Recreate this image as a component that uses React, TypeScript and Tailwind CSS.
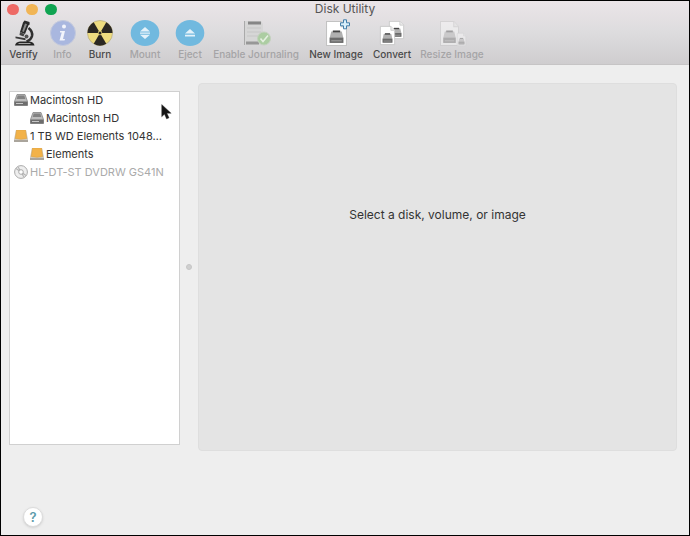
import { useState } from 'react';
import type { ReactNode } from 'react';
import clsx from 'clsx';

interface Tool {
  label: string;
  width: string;
  icon: ReactNode;
  disabled?: boolean;
}

interface Disk {
  id: string;
  name: string;
  icon: ReactNode;
  child?: boolean;
  dim?: boolean;
}

function MicroscopeIcon() {
  return (
    <svg viewBox="0 0 30 28" className="h-7 w-[30px]">
      <path d="M14 3.500l1.500-2 5 1.500.2 2.500-1.200.8-3.500 8.700-5-2z" fill="#2b2b2b" />
      <path d="M16 4.500l2 .8-3.200 7.700-1.600-.7z" fill="#8a8a8a" />
      <path d="M11 13l4.500 2-1 2.500-4-1.500z" fill="#444" />
      <path d="M19.500 9q4.500 3.500 3.500 8-1 4-5.500 5.500" fill="none" stroke="#303030" strokeWidth="2.600" />
      <path d="M6.500 17.500l10 1.800v2l-10-2z" fill="#3a3a3a" />
      <path d="M6 26.500q.5-3.500 5-4h9.500q4.500.5 5 4z" fill="#262626" />
      <path d="M9.500 24.500h12" stroke="#a5a5a5" />
      <circle cx="17.500" cy="17.500" r="2" fill="#555" />
    </svg>
  );
}

function InfoIcon() {
  return (
    <svg viewBox="0 0 30 28" className="h-7 w-[30px]">
      <circle cx="15" cy="14" r="12.500" fill="#a9b7df" stroke="#c3c9dd" />
      <circle cx="16" cy="7.500" r="2" fill="#f2f4fb" />
      <path d="M12 12h5l-2 8h2l-.5 1.500h-5l2.200-8H12z" fill="#f2f4fb" />
    </svg>
  );
}

function BurnIcon() {
  return (
    <svg viewBox="0 0 30 28" className="h-7 w-[30px]">
      <circle cx="15" cy="14" r="12.500" fill="#eedc7f" stroke="#b5a97a" strokeWidth=".7" />
      <g fill="#2b2822">
        <path d="M15 14L2.500 14A12.500 12.500 0 0 1 8.700 3.200z" />
        <path d="M15 14L21.300 3.200A12.500 12.500 0 0 1 27.500 14z" />
        <path d="M15 14L21.300 24.800A12.500 12.500 0 0 1 8.700 24.800z" />
      </g>
      <circle cx="15" cy="14" r="2.200" fill="#eedc7f" />
      <circle cx="15" cy="14" r="1.500" fill="#2b2822" />
    </svg>
  );
}

function MountIcon() {
  return (
    <svg viewBox="0 0 30 28" className="h-7 w-[30px]">
      <ellipse cx="15" cy="14" rx="14.300" ry="13" fill="#71b9df" />
      <path d="M15 8l5 4.500H10zM10 13.500h10v1.200H10zM10 15.800h10L15 20z" fill="#e4f2fa" />
    </svg>
  );
}

function EjectIcon() {
  return (
    <svg viewBox="0 0 30 28" className="h-7 w-[30px]">
      <ellipse cx="15" cy="14" rx="14.300" ry="13" fill="#71b9df" />
      <path d="M15 10l5 4.500H10zM10 15.700h10v1.800H10z" fill="#e4f2fa" />
    </svg>
  );
}

function JournalIcon() {
  return (
    <svg viewBox="0 0 30 28" className="h-7 w-[30px]">
      <path d="M3 2h17l2 3v21H3z" fill="#d6d6d6" />
      <path d="M3.500 2v24" stroke="#aaa" />
      <path d="M7 4h13" stroke="#868686" strokeWidth="3" />
      <path d="M6 9h14M6 13h14M6 17h11" stroke="#c6c6c6" />
      <path d="M5 24h13" stroke="#979797" strokeWidth="3" />
      <circle cx="23" cy="19.500" r="6.500" fill="#accda2" stroke="#c3d1be" />
      <path d="M19.500 19.500l2.500 3 5-6" fill="none" stroke="#e5efe1" strokeWidth="1.600" />
    </svg>
  );
}

function Sheet({ x, y, w, h }: { x: number; y: number; w: number; h: number }) {
  return (
    <g transform={`translate(${x} ${y}) scale(${w / 20} ${h / 24})`}>
      <path d="M.5.5h14l5 5v18H.5z" fill="#fff" stroke="#c2c2c2" />
      <path d="M14.500.5v5h5" fill="#ececec" stroke="#c6c6c6" />
      <path d="M5 10h10l1.500 6v5h-13v-5z" fill="#b0b0b0" />
      <path d="M6.500 10h7" stroke="#444" strokeWidth="1.800" />
      <path d="M3.500 16h13v5h-13z" fill="#6b6b6b" />
      <path d="M5 19h10" stroke="#a0a0a0" />
    </g>
  );
}

function NewImageIcon() {
  return (
    <svg viewBox="0 0 30 28" className="h-7 w-[30px]">
      <Sheet x={5} y={2} w={21} h={25} />
      <path d="M22.500.8h3v3h3v3h-3v3h-3v-3h-3v-3h3z" fill="#d9effb" stroke="#437eaa" />
    </svg>
  );
}

function ConvertIcon() {
  return (
    <svg viewBox="0 0 30 28" className="h-7 w-[30px]">
      <Sheet x={12} y={2} w={15} h={18} />
      <Sheet x={3} y={7} w={15} h={19} />
    </svg>
  );
}

function ResizeIcon() {
  return (
    <svg viewBox="0 0 30 28" className="h-7 w-[30px] opacity-40">
      <Sheet x={3} y={2} w={19} h={25} />
      <Sheet x={20} y={14} w={9} h={13} />
    </svg>
  );
}

function DriveIcon() {
  return (
    <svg viewBox="0 0 14 12" className="h-3 w-3.5 shrink-0">
      <path d="M3 .5h8l2.500 7v4H.5v-4z" fill="#bcbcbc" stroke="#858585" strokeWidth=".8" />
      <path d="M3.700 1.500h6.600l1 3.500H2.700z" fill="#828282" />
      <path d="M.5 7.500h13v4H.5z" fill="#6d6d6d" />
      <path d="M2 9.500h7" stroke="#c7c7c7" />
    </svg>
  );
}

function ExternalIcon() {
  return (
    <svg viewBox="0 0 14 12" className="h-3 w-3.5 shrink-0">
      <path d="M2 0h10l2 9v3H0V9z" fill="#d0cbc2" />
      <path d="M2.500 0h9l1.200 8.500q-5.700 1.500-11.400 0z" fill="#f2b248" stroke="#dca243" strokeWidth=".6" />
      <path d="M0 10h14v2H0z" fill="#aaa59c" />
    </svg>
  );
}

function DiscIcon() {
  return (
    <svg viewBox="0 0 14 14" className="h-3.5 w-3.5 shrink-0">
      <circle cx="7" cy="7" r="6.400" fill="#eee" stroke="#aaa" />
      <path d="M7 7L2 3.500M7 7L4 1.800M7 7l5 3.500M7 7l3 5.200" stroke="#b5b5b5" strokeWidth="1.200" />
      <circle cx="7" cy="7" r="2.300" fill="#fff" stroke="#999" strokeWidth=".8" />
    </svg>
  );
}

const TOOLS: Tool[] = [
  { label: 'Verify', width: 'w-[39px]', icon: <MicroscopeIcon /> },
  { label: 'Info', width: 'w-[39px]', icon: <InfoIcon />, disabled: true },
  { label: 'Burn', width: 'w-9', icon: <BurnIcon /> },
  { label: 'Mount', width: 'w-[54px]', icon: <MountIcon />, disabled: true },
  { label: 'Eject', width: 'w-9', icon: <EjectIcon />, disabled: true },
  { label: 'Enable Journaling', width: 'w-24', icon: <JournalIcon />, disabled: true },
  { label: 'New Image', width: 'w-16', icon: <NewImageIcon /> },
  { label: 'Convert', width: 'w-12', icon: <ConvertIcon /> },
  { label: 'Resize Image', width: 'w-[72px]', icon: <ResizeIcon />, disabled: true },
];

const DISKS: Disk[] = [
  { id: 'hd', name: 'Macintosh HD', icon: <DriveIcon /> },
  { id: 'hd-volume', name: 'Macintosh HD', icon: <DriveIcon />, child: true },
  { id: 'wd', name: '1 TB WD Elements 1048…', icon: <ExternalIcon /> },
  { id: 'wd-volume', name: 'Elements', icon: <ExternalIcon />, child: true },
  { id: 'dvd', name: 'HL-DT-ST DVDRW GS41N', icon: <DiscIcon />, dim: true },
];

export default function App() {
  const [selected, setSelected] = useState<string | null>(null);
  const disk = DISKS.find(d => d.id === selected);

  return (
    <div className="flex min-h-screen flex-col border border-black bg-[#eeeeee] font-['Inter',sans-serif] text-[#333]">
      <header className="border-b border-[#c6c4c5] bg-linear-to-b from-[#ebe5e8] via-[#dddcde] to-[#cfcdcf]">
        <div className="grid h-4 grid-cols-[1fr_auto_1fr] items-center px-1.5">
          <div className="flex gap-[7px]">
            <button aria-label="Close" className="h-[11px] w-3 rounded-full bg-[#ee6a66]" />
            <button aria-label="Minimize" className="h-[11px] w-3 rounded-full bg-[#f1b556]" />
            <button aria-label="Zoom" className="h-[11px] w-3 rounded-full bg-[#10a452]" />
          </div>
          <h1 className="text-xs leading-4 text-[#555]">Disk Utility</h1>
        </div>
        <nav className="flex h-[47px] items-start px-[3px] pt-0.5">
          {TOOLS.map(tool => (
            <button
              key={tool.label}
              disabled={tool.disabled}
              className={clsx(
                'flex shrink-0 flex-col items-center text-[10px] leading-[14px] font-medium whitespace-nowrap',
                tool.width,
                tool.disabled ? 'text-[#a5a4a6]' : 'text-[#4a4a4a]',
              )}
            >
              {tool.icon}
              {tool.label}
            </button>
          ))}
        </nav>
      </header>

      <main className="flex flex-1 pt-[18px] pr-3 pl-2">
        <div className="relative mt-2 mb-1.5 w-[171px] shrink-0 border border-[#d0d0d0] bg-white">
          <ul>
            {DISKS.map(d => (
              <li key={d.id}>
                <button
                  onClick={() => setSelected(d.id)}
                  className={clsx(
                    'flex h-[18px] w-full items-center gap-0.5 pb-0.5 text-left text-[11px] whitespace-nowrap',
                    d.child ? 'pl-5' : 'pl-1',
                    d.dim && 'text-[#aaa]',
                    selected === d.id && 'bg-[#cfe0f5]',
                  )}
                >
                  {d.icon}
                  {d.name}
                </button>
              </li>
            ))}
          </ul>
          <svg viewBox="0 0 10 15" className="absolute top-3 left-[151px] h-4 w-[11px]">
            <path d="M.5.5v11.500l2.600-2.500 2 4.500 2.300-1-2-4.300h4z" fill="#151515" stroke="#444" strokeWidth=".4" />
          </svg>
        </div>
        <div className="flex w-[18px] shrink-0 items-center justify-center">
          <span className="size-1.5 rounded-full border border-[#c6c6c6] bg-[#cfcfcf]" />
        </div>
        <section className="flex-1 rounded-sm border border-[#dedede] bg-[#e4e4e4] pt-[123px] text-center text-xs leading-4">
          {disk ? disk.name : 'Select a disk, volume, or image'}
        </section>
      </main>

      <footer className="flex h-[84px] items-end px-[22px] pb-2">
        <button
          aria-label="Help"
          className="size-5 rounded-full border border-[#dcdcdc] bg-white text-[13px] leading-4 font-semibold text-[#5c9cab] shadow-sm"
        >
          ?
        </button>
      </footer>
    </div>
  );
}
